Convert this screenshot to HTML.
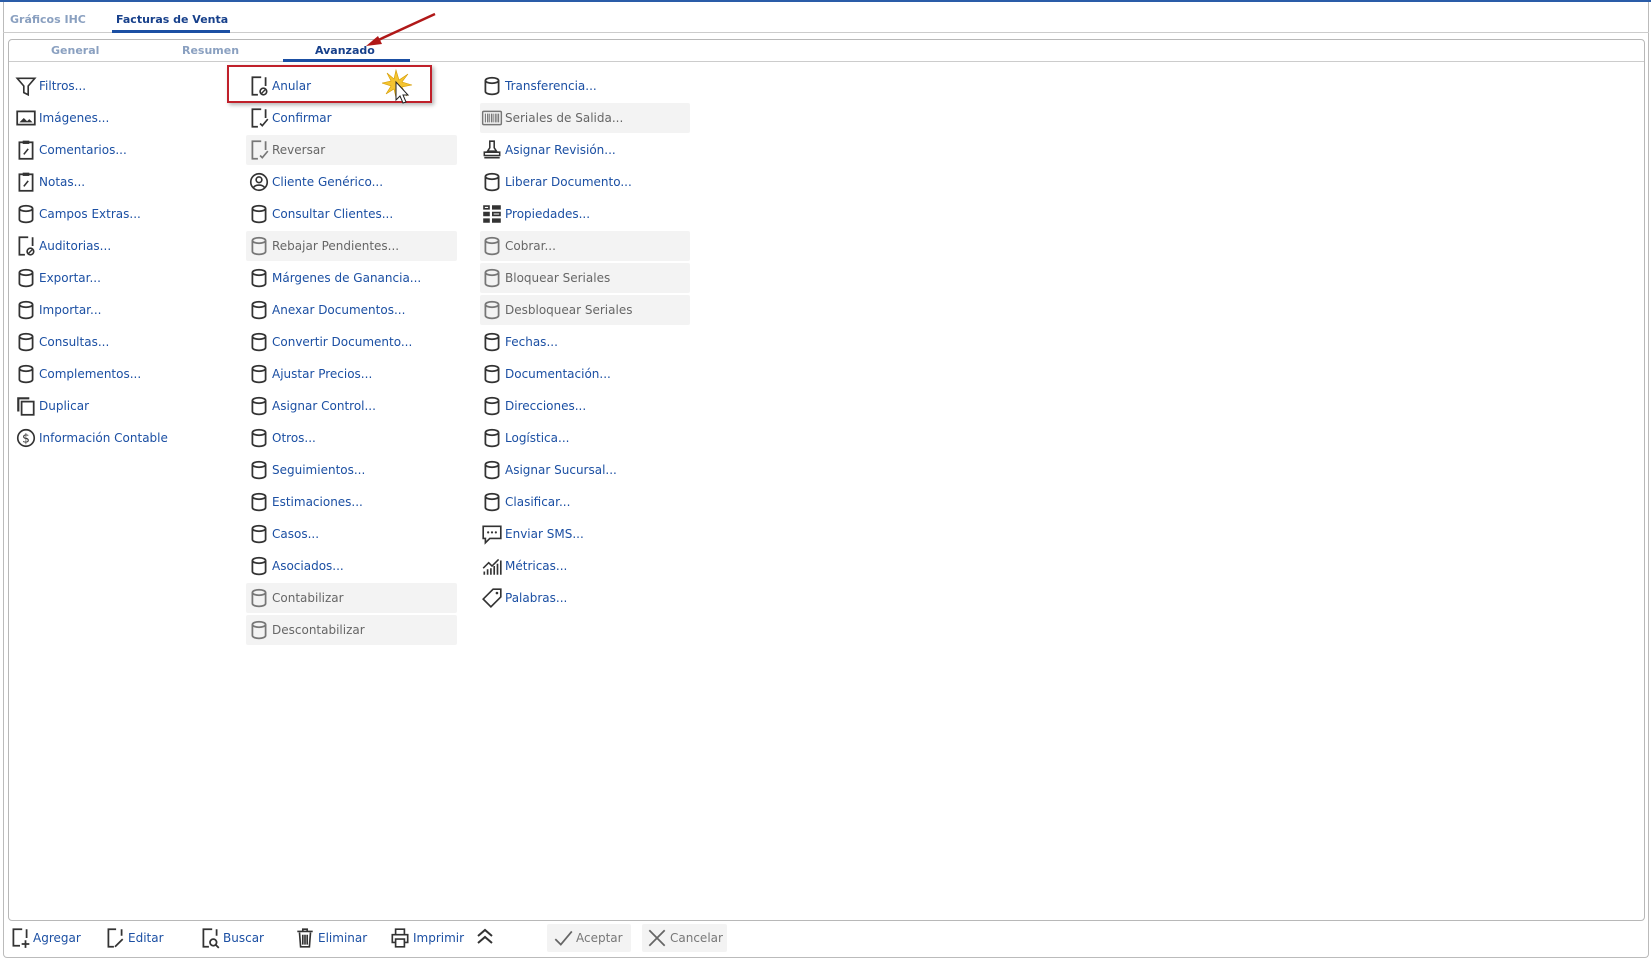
<!DOCTYPE html>
<html><head><meta charset="utf-8"><style>
*{margin:0;padding:0;box-sizing:border-box}
body{width:1651px;height:962px;background:#fff;position:relative;overflow:hidden;font-family:"DejaVu Sans","Liberation Sans",sans-serif;font-size:12px;color:#1b4fa3}
.a{position:absolute;white-space:nowrap}
.it{position:absolute;height:30px;display:flex;align-items:center}
.it svg{width:22px;height:22px;margin-right:2px;flex:none}
.dis{background:#f3f3f3;color:#666;border-radius:2px}
.tb{position:absolute;top:924px;height:28px;display:flex;align-items:center}
.tb svg{width:22px;height:22px;margin-right:2px}
</style></head><body>
<div class="a" style="left:0;top:0;width:1651px;height:2px;background:#2a5ca8"></div>
<div class="a" style="left:3px;top:2px;width:1646px;height:956px;border:1px solid #bbb;border-top:none;border-radius:0 0 4px 4px"></div>
<div class="a" style="left:3px;top:32px;width:1646px;height:1px;background:#ccc"></div>
<div class="a" style="left:10px;top:13px;font-size:11px;font-weight:bold;color:#8aa0c0">Gráficos IHC</div>
<div class="a" style="left:116px;top:13px;font-size:11px;font-weight:bold;color:#17408b">Facturas de Venta</div>
<div class="a" style="left:112px;top:30px;width:118px;height:3px;background:#1b4fa3"></div>
<div class="a" style="left:8px;top:39px;width:1637px;height:882px;border:1px solid #b8b8b8;border-radius:4px"></div>
<div class="a" style="left:9px;top:61px;width:1635px;height:1px;background:#ccc"></div>
<div class="a" style="left:51px;top:44px;font-size:11px;font-weight:bold;color:#8aa0c0">General</div>
<div class="a" style="left:182px;top:44px;font-size:11px;font-weight:bold;color:#8aa0c0">Resumen</div>
<div class="a" style="left:315px;top:44px;font-size:11px;font-weight:bold;color:#17408b">Avanzado</div>
<div class="a" style="left:283px;top:59px;width:127px;height:3px;background:#1b4fa3"></div>
<svg class="a" style="left:360px;top:10px" width="80" height="40"><line x1="75" y1="4" x2="14" y2="32" stroke="#b01818" stroke-width="2.5"/><polygon points="6,36 18,26 22,34" fill="#b01818"/></svg>
<div class="a" style="left:227px;top:65px;width:205px;height:38px;border:2px solid #c0202a;box-shadow:2px 2px 4px rgba(0,0,0,.3)"></div>
<svg class="a" style="left:382px;top:68px" width="36" height="40"><polygon points="14,2 17,12 26,6 20,14 30,17 20,19 25,28 17,21 14,30 12,21 4,26 9,18 0,15 9,13 5,5 12,11" fill="#f4c430" stroke="#d49a00" stroke-width=".6"/><path d="M14 14 L14 32 L18 28 L21 35 L24 34 L21 27 L26 27 Z" fill="#fff" stroke="#222" stroke-width="1"/></svg>
<svg width="0" height="0" style="position:absolute"><defs>
<g id="cyl"><ellipse cx="10" cy="5" rx="6" ry="2.5" fill="none" stroke="currentColor" stroke-width="1.6"/><path d="M4 5v10c0 1.5 2.7 2.6 6 2.6s6-1.1 6-2.6V5" fill="none" stroke="currentColor" stroke-width="1.6"/></g>
<g id="fil"><path d="M2 3h16l-6 7v8l-4-2v-6z" fill="none" stroke="currentColor" stroke-width="1.5"/></g>
<g id="img"><rect x="2" y="4" width="16" height="12" fill="none" stroke="currentColor" stroke-width="1.6"/><path d="M4 14l4-4 3 3 2-2 3 3z" fill="currentColor"/></g>
<g id="clip"><rect x="4" y="3" width="12" height="15" fill="none" stroke="currentColor" stroke-width="1.6"/><rect x="7" y="1.5" width="6" height="3" fill="currentColor"/><path d="M8 14l4-5" stroke="currentColor" stroke-width="1.4"/></g>
<g id="dup"><path d="M3 15V3h10" fill="none" stroke="currentColor" stroke-width="2"/><rect x="6" y="6" width="11" height="12" fill="none" stroke="currentColor" stroke-width="1.6"/></g>
<g id="dol"><circle cx="10" cy="10" r="7.5" fill="none" stroke="currentColor" stroke-width="1.5"/><text x="10" y="14" font-size="11" text-anchor="middle" fill="currentColor" font-family="DejaVu Sans">$</text></g>
<g id="doc"><path d="M12 2H4v16h5M16 2v8" fill="none" stroke="currentColor" stroke-width="1.6"/><circle cx="14" cy="15" r="3" fill="none" stroke="currentColor" stroke-width="1.5"/><path d="M12 17l4-4" stroke="currentColor" stroke-width="1.3"/></g>
<g id="conf"><path d="M12 2H4v16h5M16 2v8" fill="none" stroke="currentColor" stroke-width="1.6"/><path d="M11 15l2 2 5-6" fill="none" stroke="currentColor" stroke-width="1.5"/></g>
<g id="usr"><circle cx="10" cy="10" r="7.5" fill="none" stroke="currentColor" stroke-width="1.5"/><circle cx="10" cy="8" r="2.6" fill="none" stroke="currentColor" stroke-width="1.5"/><path d="M5 15c2-3 8-3 10 0" fill="none" stroke="currentColor" stroke-width="1.5"/></g>
<g id="bar"><rect x="1.5" y="4" width="17" height="12" rx="1" fill="none" stroke="currentColor" stroke-width="1.3"/><path d="M4 6v8M6 6v8M7.5 6v8M9.5 6v8M11 6v8M13 6v8M14.5 6v8M16 6v8" stroke="currentColor" stroke-width="1"/></g>
<g id="grid"><path d="M2 2h6v4H2zM2 8h6v4H2zM2 14h6v4H2zM10 2h8v4h-8zM10 8h8v4h-8zM10 14h8v4h-8z" fill="currentColor"/><path d="M3.5 3.5h3v1h-3zM11.5 9.5h5v1h-5z" fill="#fff"/></g>
<g id="sms"><path d="M2 3h16v11H8l-4 4v-4H2z" fill="none" stroke="currentColor" stroke-width="1.5"/><circle cx="6.5" cy="8.5" r="1" fill="currentColor"/><circle cx="10" cy="8.5" r="1" fill="currentColor"/><circle cx="13.5" cy="8.5" r="1" fill="currentColor"/></g>
<g id="met"><path d="M3 18v-3M6 18v-5M9 18v-6M12 18v-8M15 18v-10M18 18V5" stroke="currentColor" stroke-width="1.5"/><path d="M2 12l5-5 3 3 6-6" fill="none" stroke="currentColor" stroke-width="1.4"/></g>
<g id="tag"><path d="M11 2h7v7l-9 9-7-7z" fill="none" stroke="currentColor" stroke-width="1.5"/><circle cx="14.5" cy="5.5" r="1.2" fill="currentColor"/></g>
<g id="stamp"><path d="M8 2h4v6l2 3H6l2-3z M3 12h14v3H3z M3 17h14" fill="none" stroke="currentColor" stroke-width="1.4"/></g>
</defs></svg>
<div id="c"></div>
<script>
const C1=[["Filtros...","fil"],["Imágenes...","img"],["Comentarios...","clip"],["Notas...","clip"],["Campos Extras..."],["Auditorias...","doc"],["Exportar..."],["Importar..."],["Consultas..."],["Complementos..."],["Duplicar","dup"],["Información Contable","dol"]];
const C2=[["Anular",0,"doc"],["Confirmar",0,"conf"],["Reversar",1,"conf"],["Cliente Genérico...",0,"usr"],["Consultar Clientes..."],["Rebajar Pendientes...",1],["Márgenes de Ganancia..."],["Anexar Documentos..."],["Convertir Documento..."],["Ajustar Precios..."],["Asignar Control..."],["Otros..."],["Seguimientos..."],["Estimaciones..."],["Casos..."],["Asociados..."],["Contabilizar",1],["Descontabilizar",1]];
const C3=[["Transferencia..."],["Seriales de Salida...",1,"bar"],["Asignar Revisión...",0,"stamp"],["Liberar Documento..."],["Propiedades...",0,"grid"],["Cobrar...",1],["Bloquear Seriales",1],["Desbloquear Seriales",1],["Fechas..."],["Documentación..."],["Direcciones..."],["Logística..."],["Asignar Sucursal..."],["Clasificar..."],["Enviar SMS...",0,"sms"],["Métricas...",0,"met"],["Palabras...",0,"tag"]];
const ic=(g,d)=>`<svg viewBox="0 0 20 20" style="color:${d?'#777':'#333'}"><use href="#${g||'cyl'}"/></svg>`;
let h='';
C1.forEach((t,i)=>{h+=`<div class="it" style="left:15px;top:${71+i*32}px">${ic(t[1])}${t[0]}</div>`});
C2.forEach((t,i)=>{h+=`<div class="it ${t[1]?'dis':''}" style="left:246px;width:211px;top:${71+i*32}px;padding-left:2px">${ic(t[2],t[1])}${t[0]}</div>`});
C3.forEach((t,i)=>{h+=`<div class="it ${t[1]?'dis':''}" style="left:480px;width:210px;top:${71+i*32}px;padding-left:1px">${ic(t[2],t[1])}${t[0]}</div>`});
document.getElementById('c').innerHTML=h;
</script>
<div class="tb" style="left:9px">
<svg viewBox="0 0 20 20"><path d="M12 2H4v15h6M16 2v8" fill="none" stroke="#333" stroke-width="1.6"/><path d="M15 12v7M11.5 15.5h7" stroke="#333" stroke-width="1.6"/></svg>Agregar</div>
<div class="tb" style="left:104px"><svg viewBox="0 0 20 20"><path d="M11 2H4v16h5M16 2v6M10 18l7-7" fill="none" stroke="#333" stroke-width="1.6"/></svg>Editar</div>
<div class="tb" style="left:199px"><svg viewBox="0 0 20 20"><path d="M12 2H4v16h5M16 2v6" fill="none" stroke="#333" stroke-width="1.6"/><circle cx="13" cy="14" r="3" fill="none" stroke="#333" stroke-width="1.6"/><path d="M15 16l3 3" stroke="#333" stroke-width="1.6"/></svg>Buscar</div>
<div class="tb" style="left:294px"><svg viewBox="0 0 20 20"><path d="M3 4h14M8 4V2h4v2M5 5l1 13h8l1-13M8 7v9M10 7v9M12 7v9" fill="none" stroke="#333" stroke-width="1.5"/></svg>Eliminar</div>
<div class="tb" style="left:389px"><svg viewBox="0 0 20 20"><path d="M6 7V2h8v5M6 14H3V7h14v7h-3M6 11h8v7H6z" fill="none" stroke="#333" stroke-width="1.5"/></svg>Imprimir</div>
<svg class="a" style="left:474px;top:927px" width="22" height="20"><path d="M4 9l7-6 7 6M4 16l7-6 7 6" fill="none" stroke="#333" stroke-width="2"/></svg>
<div class="tb dis" style="left:547px;width:84px;padding-left:5px;color:#777"><svg viewBox="0 0 20 20"><path d="M3 11l5 5 10-12" fill="none" stroke="#666" stroke-width="1.6"/></svg>Aceptar</div>
<div class="tb dis" style="left:642px;width:85px;padding-left:4px;color:#777"><svg viewBox="0 0 20 20"><path d="M3 3l14 14M17 3L3 17" fill="none" stroke="#666" stroke-width="1.6"/></svg>Cancelar</div>
</body></html>
